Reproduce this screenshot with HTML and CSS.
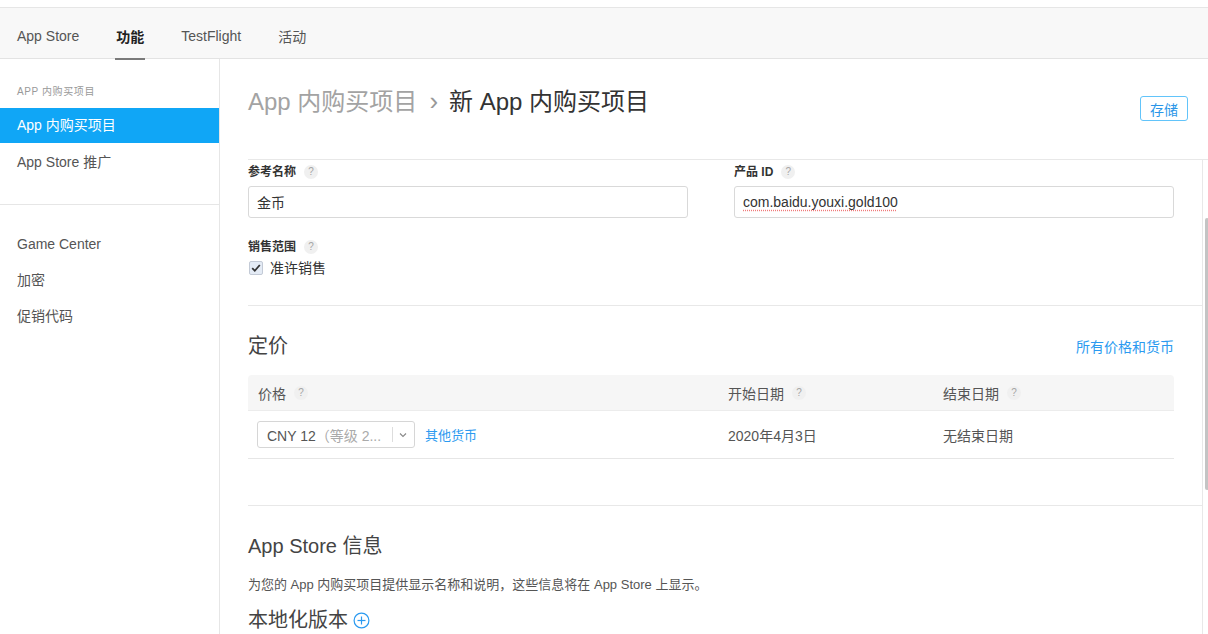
FILE: index.html
```
<!DOCTYPE html>
<html lang="zh-CN">
<head>
<meta charset="utf-8">
<title>新 App 内购买项目</title>
<link rel="stylesheet" href="styles.css">
</head>
<body>
<div class="topgap"></div>
<nav class="tabs">
  <a class="tab">App Store</a>
  <a class="tab active">功能</a>
  <a class="tab">TestFlight</a>
  <a class="tab">活动</a>
</nav>
<div class="layout">
  <aside class="sidebar">
    <div class="side-label">APP 内购买项目</div>
    <ul class="side-list">
      <li class="side-item selected">App 内购买项目</li>
      <li class="side-item">App Store 推广</li>
    </ul>
    <ul class="side-list second">
      <li class="side-item">Game Center</li>
      <li class="side-item">加密</li>
      <li class="side-item">促销代码</li>
    </ul>
  </aside>
  <main class="main">
    <header class="page-head">
      <h1 class="title"><span class="crumb">App 内购买项目</span><span class="sep">›</span><span class="current">新 App 内购买项目</span></h1>
      <button class="save">存储</button>
    </header>
    <div class="scroll">
      <div class="content">
        <section class="section form">
          <div class="grid2">
            <div class="field">
              <div class="label">参考名称 <span class="help">?</span></div>
              <div class="input">金币</div>
            </div>
            <div class="field">
              <div class="label">产品 ID <span class="help">?</span></div>
              <div class="input"><span class="spell">com.baidu.youxi.gold100</span></div>
            </div>
          </div>
          <div class="label scope">销售范围 <span class="help">?</span></div>
          <label class="check-row"><span class="checkbox"><svg width="12" height="12" viewBox="0 0 12 12"><polyline points="2.2,6.2 4.8,8.8 9.8,3" fill="none" stroke="#333" stroke-width="1.8"/></svg></span>准许销售</label>
        </section>
        <section class="section pricing">
          <div class="sec-head">
            <h2 class="h2">定价</h2>
            <a class="link">所有价格和货币</a>
          </div>
          <div class="table">
            <div class="thead">
              <div class="cell">价格 <span class="help">?</span></div>
              <div class="cell">开始日期 <span class="help">?</span></div>
              <div class="cell">结束日期 <span class="help">?</span></div>
            </div>
            <div class="trow">
              <div class="cell first">
                <div class="select"><span class="sel-text">CNY 12<span class="muted">（等级 2...</span></span><span class="sel-div"></span><svg class="chev" width="8" height="6" viewBox="0 0 8 6"><polyline points="1,1.5 4,4.5 7,1.5" fill="none" stroke="#888" stroke-width="1.1"/></svg></div>
                <a class="link small">其他货币</a>
              </div>
              <div class="cell">2020年4月3日</div>
              <div class="cell">无结束日期</div>
            </div>
          </div>
        </section>
        <section class="section info">
          <h2 class="h2">App Store 信息</h2>
          <p class="desc">为您的 App 内购买项目提供显示名称和说明，这些信息将在 App Store 上显示。</p>
          <h2 class="h2 loc">本地化版本 <svg class="plus" width="17" height="17" viewBox="0 0 17 17"><circle cx="8.5" cy="8.5" r="7.4" fill="none" stroke="#2b9af0" stroke-width="1.2"/><line x1="8.5" y1="4.5" x2="8.5" y2="12.5" stroke="#2b9af0" stroke-width="1.2"/><line x1="4.5" y1="8.5" x2="12.5" y2="8.5" stroke="#2b9af0" stroke-width="1.2"/></svg></h2>
        </section>
      </div>
      <div class="scrollbar"><div class="thumb"></div></div>
    </div>
  </main>
</div>
</body>
</html>
```
FILE: styles.css
```
* { box-sizing: border-box; }
html, body { margin: 0; padding: 0; }
body {
  font-family: "Liberation Sans", "Noto Sans CJK SC", sans-serif;
  color: #333;
  background: #fff;
  width: 1208px;
  height: 634px;
  overflow: hidden;
}
.topgap { height: 7px; background: #fff; }
.tabs {
  display: flex;
  gap: 37px;
  height: 52px;
  padding: 6px 0 0 17px;
  background: #f8f8f8;
  border-top: 1px solid #e6e6e6;
  border-bottom: 1px solid #e3e3e3;
}
.tab {
  position: relative;
  display: flex;
  align-items: center;
  font-size: 14px;
  color: #555;
}
.tab.active { color: #222; font-weight: bold; }
.tab.active::after {
  content: "";
  position: absolute;
  left: -1px; right: -1px; bottom: -2px;
  height: 2px;
  background: #7a7a7a;
}
.layout { display: flex; height: 575px; }
.sidebar {
  width: 220px;
  flex: none;
  border-right: 1px solid #e6e6e6;
  padding-top: 26px;
}
.side-label {
  font-size: 10px;
  line-height: 14px;
  color: #999;
  letter-spacing: 0.6px;
  padding-left: 17px;
  margin-bottom: 9px;
}
.side-list { list-style: none; margin: 0; padding: 0; }
.side-list:first-of-type { padding-bottom: 24px; border-bottom: 1px solid #e6e6e6; }
.side-list.second { padding-top: 21px; }
.side-item {
  height: 36px;
  line-height: 36px;
  padding-left: 17px;
  font-size: 14px;
  color: #555;
}
.side-item.selected { background: #10a6f6; color: #fff; height: 35px; line-height: 35px; margin-bottom: 1px; }
.main { flex: 1; display: flex; flex-direction: column; min-width: 0; }
.page-head {
  height: 101px;
  margin-left: 28px;
  padding: 26px 20px 0 0;
  display: flex;
  justify-content: space-between;
  align-items: flex-start;
  border-bottom: 1px solid #e8e8e8;
}
.title { margin: 0; font-size: 24px; line-height: 32px; font-weight: normal; }
.crumb { color: #a3a3a3; }
.sep { color: #999; margin: 0 11px 0 12px; font-size: 26px; }
.current { color: #333; }
.save {
  margin-top: 11px;
  width: 48px;
  height: 25px;
  border: 1px solid #62c4fa;
  border-radius: 3px;
  background: #fff;
  color: #2a96e8;
  font-family: inherit;
  font-size: 14px;
  padding: 0;
}
.scroll { flex: 1; display: flex; min-height: 0; }
.content { flex: 1; margin-left: 28px; }
.scrollbar { width: 6px; border-left: 1px solid #e8e8e8; padding: 58px 0 0 2px; }
.thumb { width: 4px; height: 272px; background: #c4c4c4; border-radius: 2px; }
.section { border-bottom: 1px solid #e8e8e8; padding-right: 28px; }
.form { padding-top: 4px; padding-bottom: 27px; }
.grid2 { display: grid; grid-template-columns: 440px 440px; column-gap: 46px; }
.label {
  display: flex;
  align-items: center;
  gap: 8px;
  font-size: 12px;
  line-height: 16px;
  font-weight: bold;
  color: #333;
}
.help {
  display: inline-flex;
  align-items: center;
  justify-content: center;
  width: 14px;
  height: 14px;
  border-radius: 50%;
  background: #f0f0f0;
  color: #a5a5a5;
  font-size: 10px;
  font-weight: normal;
}
.input {
  margin-top: 6px;
  height: 32px;
  border: 1px solid #d9d9d9;
  border-radius: 3px;
  padding: 0 8px;
  display: flex;
  align-items: center;
  font-size: 14px;
  color: #333;
}
.spell { text-decoration: underline dotted #f07a7a; text-underline-offset: 3px; }
.scope { margin-top: 21px; }
.check-row {
  margin-top: 3px;
  display: flex;
  align-items: center;
  gap: 7px;
  font-size: 14px;
  line-height: 20px;
  color: #333;
}
.checkbox {
  width: 14px;
  height: 14px;
  margin-left: 1px;
  border: 1px solid #c3cad6;
  border-radius: 2px;
  background: #e4ebf5;
  display: flex;
  align-items: center;
  justify-content: center;
}
.pricing { padding-top: 26px; padding-bottom: 46px; }
.sec-head { display: flex; justify-content: space-between; align-items: center; }
.h2 { margin: 0; font-size: 20px; line-height: 28px; font-weight: normal; color: #444; }
.link { color: #2b9af0; font-size: 14px; }
.link.small { font-size: 13px; }
.table { margin-top: 15px; }
.thead, .trow { display: grid; grid-template-columns: 470px 215px 1fr; }
.thead {
  height: 36px;
  background: #f6f6f6;
  border-radius: 4px 4px 0 0;
  border-bottom: 1px solid #ececec;
  align-items: center;
}
.cell {
  padding-left: 10px;
  font-size: 14px;
  color: #555;
  display: flex;
  align-items: center;
  gap: 8px;
}
.trow { height: 48px; border-bottom: 1px solid #e6e6e6; }
.cell.first { padding-left: 9px; gap: 10px; }
.select {
  width: 158px;
  height: 27px;
  border: 1px solid #d6d6d6;
  border-radius: 3px;
  display: flex;
  align-items: center;
  padding-left: 9px;
  font-size: 14px;
  color: #555;
}
.sel-text { flex: 1; white-space: nowrap; overflow: hidden; }
.muted { color: #aaa; }
.sel-div { width: 1px; height: 15px; background: #ddd; margin-right: 6px; }
.chev { margin-right: 7px; }
.info { border-bottom: none; padding-top: 26px; }
.desc { margin: 15px 0 0; font-size: 13px; line-height: 20px; color: #555; }
.loc { margin-top: 11px; display: flex; align-items: center; gap: 5px; }
```
